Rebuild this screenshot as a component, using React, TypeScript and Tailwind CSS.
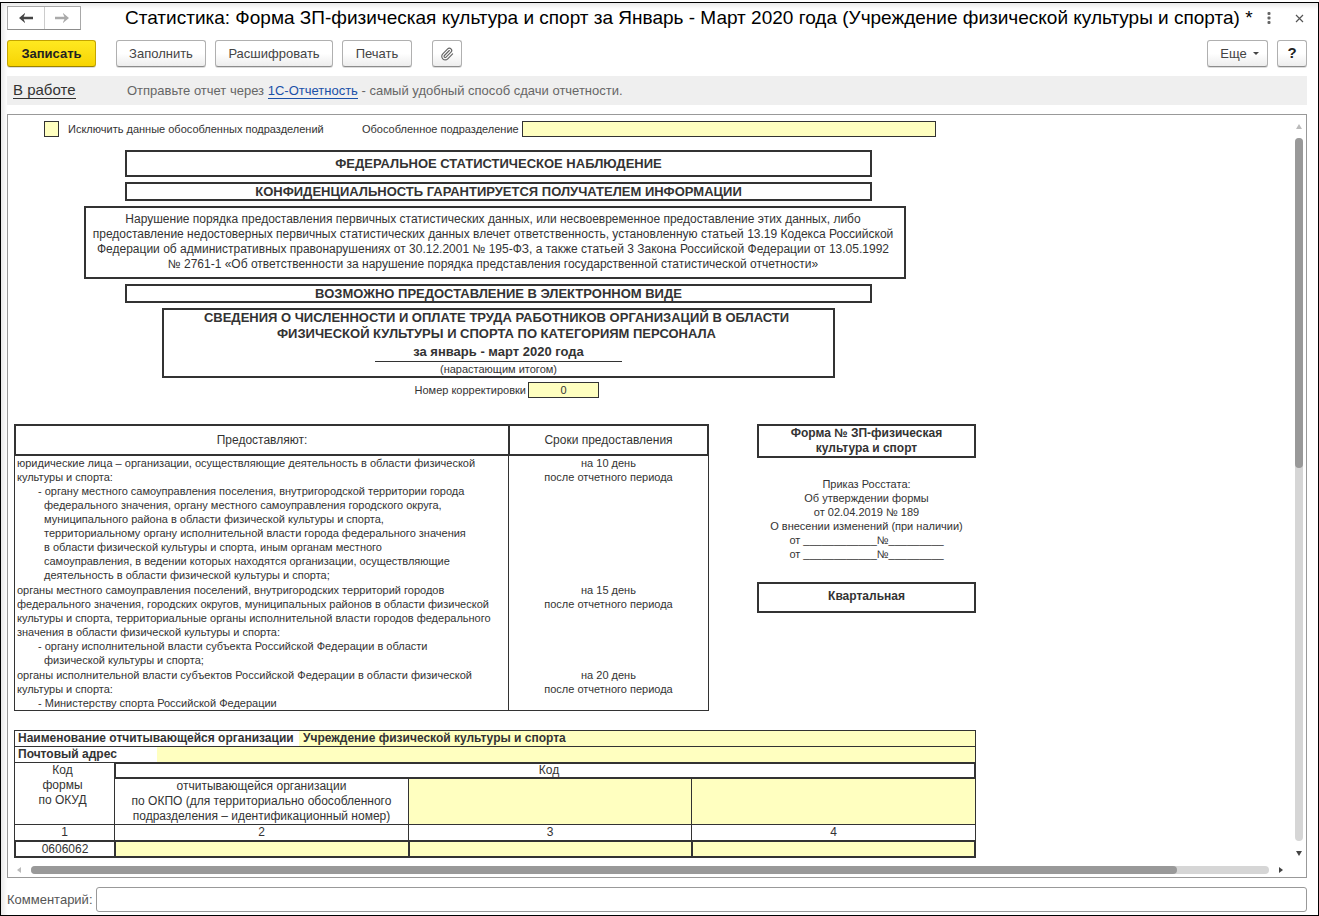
import { Paperclip } from "lucide-react";

const groups = [
  {
    lines: [
      "юридические лица – организации, осуществляющие деятельность в области физической",
      "культуры и спорта:",
      "- органу местного самоуправления поселения, внутригородской территории города",
      "  федерального значения, органу местного самоуправления городского округа,",
      "  муниципального района в области физической культуры и спорта,",
      "  территориальному органу исполнительной власти города федерального значения",
      "  в области физической культуры и спорта, иным органам местного",
      "  самоуправления, в ведении которых находятся организации, осуществляющие",
      "  деятельность в области физической культуры и спорта;",
    ],
    term: "на 10 день",
  },
  {
    lines: [
      "органы местного самоуправления поселений, внутригородских территорий городов",
      "федерального значения, городских округов, муниципальных районов в области физической",
      "культуры и спорта, территориальные органы исполнительной власти городов федерального",
      "значения в области физической культуры и спорта:",
      "- органу исполнительной власти субъекта Российской Федерации в области",
      "  физической культуры и спорта;",
    ],
    term: "на 15 день",
  },
  {
    lines: [
      "органы исполнительной власти субъектов Российской Федерации в области физической",
      "культуры и спорта:",
      "- Министерству спорта Российской Федерации",
    ],
    term: "на 20 день",
  },
];

function lineClass(line: string) {
  if (line.startsWith("- ")) return "pl-[21px]";
  if (line.startsWith("  ")) return "pl-[27px]";
  return "";
}

const buttonClass =
  "flex h-[27px] items-center justify-center rounded-[3px] border border-[#b0b0b0] border-b-[#8c8c8c] bg-linear-to-b from-white from-50% to-[#ededed] text-[13px] text-[#444] shadow-[0_1px_0_#ddd]";

function Arrow({ dir, color }: { dir: "up" | "down" | "left" | "right"; color: string }) {
  const points = {
    up: "0,6 3,1 6,6",
    down: "0,1 6,1 3,6",
    left: "5,0 1,3 5,6",
    right: "1,0 5,3 1,6",
  }[dir];
  return (
    <svg width="6" height="6" viewBox="0 0 6 6" className="shrink-0">
      <polygon points={points} fill={color} />
    </svg>
  );
}

function Header() {
  return (
    <header className="flex h-6 items-center">
      <div className="flex h-6 w-[74px] shrink-0 border border-[#a8a8a8] border-b-[#8c8c8c] bg-white">
        <button aria-label="Назад" className="flex flex-1 items-center justify-center border-r border-[#ccc]">
          <svg width="14" height="10" viewBox="0 0 14 10">
            <path d="M0 5 L6 0 V0.8 L4.6 3.8 H14 V6.2 H4.6 L6 9.2 V10 Z" fill="#444" />
          </svg>
        </button>
        <button aria-label="Вперед" className="flex flex-1 items-center justify-center">
          <svg width="14" height="10" viewBox="0 0 14 10">
            <path d="M14 5 L8 0 V0.8 L9.4 3.8 H0 V6.2 H9.4 L8 9.2 V10 Z" fill="#aaa" />
          </svg>
        </button>
      </div>
      <h1 className="ml-11 whitespace-nowrap text-[19px] leading-6 text-black">
        Статистика: Форма ЗП-физическая культура и спорт за Январь - Март 2020 года (Учреждение физической культуры и спорта) *
      </h1>
      <div className="ml-auto flex items-center gap-6 pr-[3px]">
        <button aria-label="Меню">
          <svg width="4" height="12" viewBox="0 0 4 12" fill="#666">
            <rect x="0.5" y="0" width="3" height="3" rx="1" />
            <rect x="0.5" y="4.5" width="3" height="3" rx="1" />
            <rect x="0.5" y="9" width="3" height="3" rx="1" />
          </svg>
        </button>
        <button aria-label="Закрыть">
          <svg width="9" height="9" viewBox="0 0 9 9" stroke="#555" strokeWidth="1.2">
            <path d="M1 1 L8 8 M8 1 L1 8" />
          </svg>
        </button>
      </div>
    </header>
  );
}

function Toolbar() {
  return (
    <div className="mt-[10px] flex items-center">
      <button className="h-[27px] w-[89px] rounded-[3px] border border-[#c4a500] border-b-[#9c8400] bg-linear-to-b from-[#ffe91f] to-[#f7d400] text-[13px] font-bold text-[#222] shadow-[0_1px_0_#ddd]">
        Записать
      </button>
      <div className="ml-5 flex gap-[9px]">
        <button className={`${buttonClass} w-[90px]`}>Заполнить</button>
        <button className={`${buttonClass} w-[118px]`}>Расшифровать</button>
        <button className={`${buttonClass} w-[70px]`}>Печать</button>
      </div>
      <button aria-label="Файлы" className={`${buttonClass} ml-5 w-[30px]`}>
        <Paperclip size={14} strokeWidth={2} color="#666" />
      </button>
      <div className="ml-auto flex gap-[9px]">
        <button className={`${buttonClass} w-[61px] gap-[6px] pl-1`}>
          Еще
          <svg width="6" height="3" viewBox="0 0 6 3">
            <polygon points="0,0 6,0 3,3" fill="#444" />
          </svg>
        </button>
        <button className={`${buttonClass} w-[30px]`}>
          <span className="text-[15px] font-bold text-[#222]">?</span>
        </button>
      </div>
    </div>
  );
}

function TitleBoxes() {
  return (
    <div className="mt-[13px] flex flex-col items-start gap-[5px] pl-[76px] text-center text-[13px] leading-[15px]">
      <div className="ml-[41px] w-[747px] border-2 border-[#333] py-1 font-bold">ФЕДЕРАЛЬНОЕ СТАТИСТИЧЕСКОЕ НАБЛЮДЕНИЕ</div>
      <div className="ml-[41px] w-[747px] border-2 border-[#333] font-bold">КОНФИДЕНЦИАЛЬНОСТЬ ГАРАНТИРУЕТСЯ ПОЛУЧАТЕЛЕМ ИНФОРМАЦИИ</div>
      <p className="w-[822px] whitespace-nowrap border-2 border-[#333] pt-1 pr-1 pb-[5px] text-[12px] leading-[15px]">
        Нарушение порядка предоставления первичных статистических данных, или несвоевременное предоставление этих данных, либо
        <br />
        предоставление недостоверных первичных статистических данных влечет ответственность, установленную статьей 13.19 Кодекса Российской
        <br />
        Федерации об административных правонарушениях от 30.12.2001 № 195-ФЗ, а также статьей 3 Закона Российской Федерации от 13.05.1992
        <br />№ 2761-1 «Об ответственности за нарушение порядка представления государственной статистической отчетности»
      </p>
      <div className="ml-[41px] w-[747px] border-2 border-[#333] font-bold">ВОЗМОЖНО ПРЕДОСТАВЛЕНИЕ В ЭЛЕКТРОННОМ ВИДЕ</div>
      <div className="ml-[78px] flex w-[673px] flex-col items-center border-2 border-[#333]">
        <h2 className="pr-1 font-bold leading-4">
          СВЕДЕНИЯ О ЧИСЛЕННОСТИ И ОПЛАТЕ ТРУДА РАБОТНИКОВ ОРГАНИЗАЦИЙ В ОБЛАСТИ
          <br />
          ФИЗИЧЕСКОЙ КУЛЬТУРЫ И СПОРТА ПО КАТЕГОРИЯМ ПЕРСОНАЛА
        </h2>
        <div className="w-[247px] border-b border-[#333] pt-[2px] pb-[1px] font-bold leading-4">за январь - март 2020 года</div>
        <div className="text-[11px] leading-[14px]">(нарастающим итогом)</div>
      </div>
    </div>
  );
}

function SubmittersTable() {
  return (
    <table className="w-[695px] shrink-0 table-fixed border-separate border-spacing-0">
      <thead>
        <tr className="h-8 text-[12px]">
          <th className="w-[494px] border-y-2 border-l-2 border-[#333] font-normal">Предоставляют:</th>
          <th className="border-2 border-[#333] font-normal">Сроки предоставления</th>
        </tr>
      </thead>
      <tbody>
        {groups.map((group) => (
          <tr key={group.term} className="group align-top">
            <td className="whitespace-nowrap border-l border-[#333] pb-[1px] pl-[2px] group-last:border-b group-last:pb-0">
              {group.lines.map((line) => (
                <div key={line} className={lineClass(line)}>
                  {line.trim()}
                </div>
              ))}
            </td>
            <td className="border-x border-[#333] text-center group-last:border-b">
              {group.term}
              <br />
              после отчетного периода
            </td>
          </tr>
        ))}
      </tbody>
    </table>
  );
}

function FormInfo() {
  return (
    <div className="w-[219px] text-center">
      <div className="border-2 border-[#333] text-[12px] font-bold leading-[15px]">
        Форма № ЗП-физическая
        <br />
        культура и спорт
      </div>
      <div className="mt-[19px]">
        Приказ Росстата:
        <br />
        Об утверждении формы
        <br />
        от 02.04.2019 № 189
        <br />
        О внесении изменений (при наличии)
        <br />
        от ____________№_________
        <br />
        от ____________№_________
      </div>
      <div className="mt-[21px] border-2 border-[#333] pt-[5px] pb-[7px] text-[12px] font-bold leading-[15px]">Квартальная</div>
    </div>
  );
}

const cellInput = "block h-full w-full bg-[#ffffc0] px-1 text-center outline-none";

function OrganizationTable() {
  return (
    <table className="mt-[19px] ml-[6px] w-[962px] table-fixed border-separate border-spacing-0 text-[12px] leading-[15px]">
      <colgroup>
        <col className="w-[100px]" />
        <col className="w-[294px]" />
        <col className="w-[283px]" />
        <col className="w-[285px]" />
      </colgroup>
      <tbody>
        <tr>
          <td colSpan={4} className="border-x border-t border-[#333]">
            <div className="flex h-[15px] font-bold">
              <label htmlFor="org" className="w-[284px] shrink-0 whitespace-nowrap pl-[3px]">
                Наименование отчитывающейся организации
              </label>
              <input id="org" defaultValue="Учреждение физической культуры и спорта" className="min-w-0 flex-1 bg-[#ffffc0] pl-1 outline-none" />
            </div>
          </td>
        </tr>
        <tr>
          <td colSpan={4} className="border-x border-t border-[#333]">
            <div className="flex h-[15px] font-bold">
              <label htmlFor="address" className="w-[142px] shrink-0 pl-[3px]">
                Почтовый адрес
              </label>
              <input id="address" className="min-w-0 flex-1 bg-[#ffffc0] pl-1 outline-none" />
            </div>
          </td>
        </tr>
        <tr className="text-center">
          <td rowSpan={2} className="border-t border-l border-[#333] pr-1 align-top">
            Код
            <br />
            формы
            <br />
            по ОКУД
          </td>
          <td colSpan={3} className="border-2 border-[#333] pl-2 leading-[13px]">
            Код
          </td>
        </tr>
        <tr className="h-[45px] text-center">
          <td className="whitespace-nowrap border-l border-[#333]">
            отчитывающейся организации
            <br />
            по ОКПО (для территориально обособленного
            <br />
            подразделения – идентификационный номер)
          </td>
          <td className="h-[45px] border-l border-[#333]">
            <input aria-label="Код 3" className={cellInput} />
          </td>
          <td className="h-[45px] border-x border-[#333]">
            <input aria-label="Код 4" className={cellInput} />
          </td>
        </tr>
        <tr className="text-center">
          <td className="border-t border-l border-[#333]">1</td>
          <td className="border-t border-l border-[#333]">2</td>
          <td className="border-t border-l border-[#333]">3</td>
          <td className="border-x border-t border-[#333]">4</td>
        </tr>
        <tr className="text-center leading-[13px]">
          <td className="border-y-2 border-l-2 border-[#333]">0606062</td>
          <td className="h-[17px] border-y-2 border-l-2 border-[#333]">
            <input aria-label="Значение 2" className={cellInput} />
          </td>
          <td className="h-[17px] border-y-2 border-l-2 border-[#333]">
            <input aria-label="Значение 3" className={cellInput} />
          </td>
          <td className="h-[17px] border-2 border-[#333]">
            <input aria-label="Значение 4" className={cellInput} />
          </td>
        </tr>
      </tbody>
    </table>
  );
}

function Sheet() {
  return (
    <div className="min-w-0 flex-1 overflow-hidden text-[11px] leading-[14px] text-[#333]">
      <div className="flex items-center pt-[6px] pl-9">
        <input id="exclude" type="checkbox" className="h-4 w-[15px] appearance-none border border-[#333] bg-[#ffffc0]" />
        <label htmlFor="exclude" className="w-[303px] pl-[9px]">
          Исключить данные обособленных подразделений
        </label>
        <label htmlFor="division" className="w-[160px]">
          Обособленное подразделение
        </label>
        <input id="division" className="h-4 w-[414px] border border-[#333] bg-[#ffffc0] px-1 outline-none" />
      </div>
      <TitleBoxes />
      <div className="mt-1 flex w-[591px] items-center justify-end gap-[2px]">
        <label htmlFor="correction">Номер корректировки</label>
        <input id="correction" defaultValue="0" className="h-4 w-[71px] border border-[#333] bg-[#ffffc0] text-center outline-none" />
      </div>
      <div className="mt-[26px] ml-[6px] flex items-start gap-12">
        <SubmittersTable />
        <FormInfo />
      </div>
      <OrganizationTable />
    </div>
  );
}

export default function App() {
  return (
    <div className="flex min-h-screen flex-col bg-white pt-[2px] font-['Liberation_Sans',Arial,sans-serif]">
      <div className="flex flex-1 flex-col border border-black pt-[3px] pr-[11px] pb-[3px] pl-[6px] shadow-[inset_4px_4px_5px_-1px_#e8e8e8]">
        <Header />
        <Toolbar />
        <div className="mt-[9px] flex h-[29px] items-center bg-[#efefef] text-[13px] text-[#666]">
          <a href="#status" className="ml-[6px] w-[114px] text-[15px] text-[#333]">
            <span className="border-b border-[#333]">В работе</span>
          </a>
          <p>
            Отправьте отчет через{" "}
            <a href="#report" className="border-b border-[#1a50a8] text-[#1a50a8]">
              1С-Отчетность
            </a>{" "}
            - самый удобный способ сдачи отчетности.
          </p>
        </div>
        <main className="mt-[9px] flex flex-1 flex-col border border-[#999] bg-white">
          <div className="flex flex-1">
            <Sheet />
            <div className="flex w-[14px] shrink-0 flex-col items-center pt-2 pb-[6px]">
              <Arrow dir="up" color="#bbb" />
              <div className="my-[9px] w-2 flex-1 rounded-full bg-[#d6d6d6]">
                <div className="h-[47%] rounded-full bg-[#999]" />
              </div>
              <Arrow dir="down" color="#444" />
            </div>
          </div>
          <div className="flex h-[15px] items-center pr-[22px] pl-2">
            <Arrow dir="left" color="#bbb" />
            <div className="mx-[9px] h-2 flex-1 rounded-full bg-[#d6d6d6]">
              <div className="h-2 w-25/27 rounded-full bg-[#999]" />
            </div>
            <Arrow dir="right" color="#444" />
          </div>
        </main>
        <div className="mt-[9px] flex items-center text-[13px] text-[#555]">
          <label htmlFor="comment" className="w-[89px]">
            Комментарий:
          </label>
          <input id="comment" className="h-[25px] flex-1 rounded-[3px] border border-[#999] bg-white px-2 outline-none" />
        </div>
      </div>
    </div>
  );
}
